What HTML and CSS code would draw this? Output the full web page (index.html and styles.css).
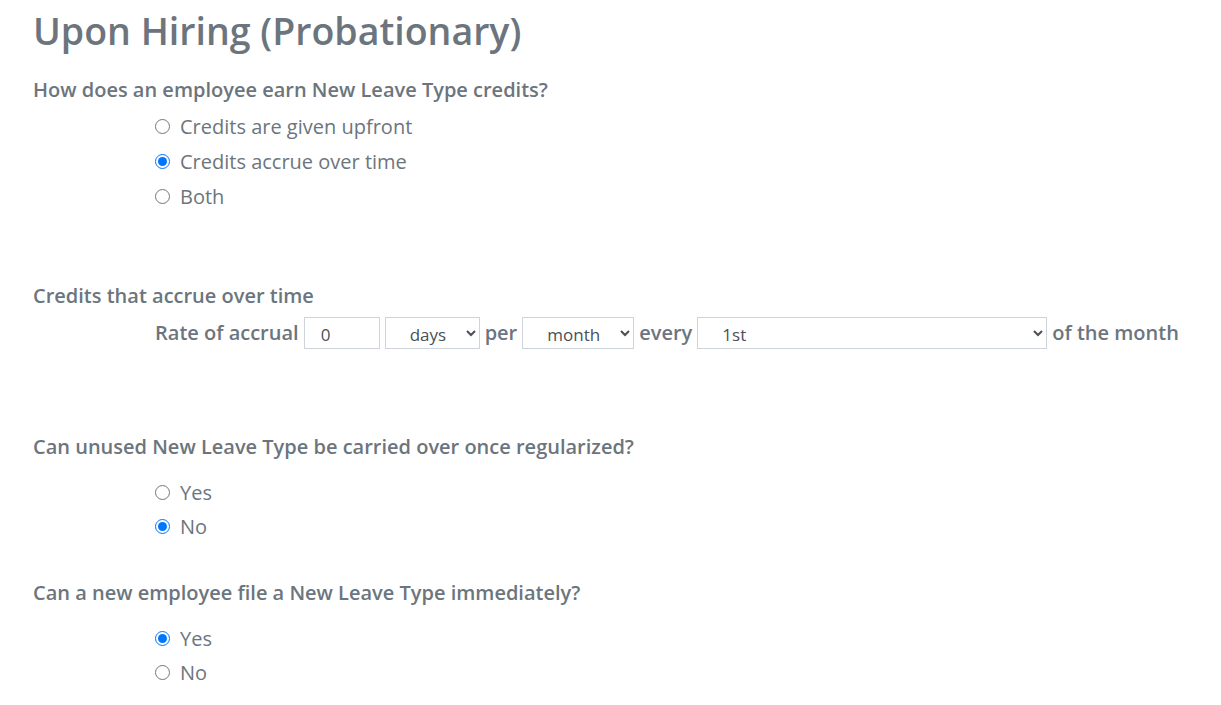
FILE: index.html
```html
<!DOCTYPE html>
<html lang="en">
<head>
  <meta charset="UTF-8" />
  <title>Upon Hiring (Probationary)</title>
  <link rel="stylesheet" href="styles.css">
</head>
<body>
  <div class="page">
    <h1 class="title">Upon Hiring (Probationary)</h1>

    <div class="question q-earn">How does an employee earn New Leave Type credits?</div>
    <div class="options opts-earn">
      <label class="option"><input type="radio" name="earn"> Credits are given upfront</label>
      <label class="option"><input type="radio" name="earn" checked> Credits accrue over time</label>
      <label class="option"><input type="radio" name="earn"> Both</label>
    </div>

    <div class="question q-accrue">Credits that accrue over time</div>
    <div class="rate-row">
      <span class="rate-label">Rate of accrual</span>
      <input type="text" class="field field-num" value="0">
      <select class="field field-unit">
        <option>days</option>
        <option>hours</option>
      </select>
      <span class="rate-label">per</span>
      <select class="field field-period">
        <option>month</option>
        <option>year</option>
      </select>
      <span class="rate-label">every</span>
      <select class="field field-day">
        <option>1st</option>
        <option>15th</option>
      </select>
      <span class="rate-label">of the month</span>
    </div>

    <div class="question q-carry">Can unused New Leave Type be carried over once regularized?</div>
    <div class="options opts-tight">
      <label class="option option-sm"><input type="radio" name="carry"> Yes</label>
      <label class="option option-sm"><input type="radio" name="carry" checked> No</label>
    </div>

    <div class="question q-file">Can a new employee file a New Leave Type immediately?</div>
    <div class="options opts-tight">
      <label class="option option-sm"><input type="radio" name="file" checked> Yes</label>
      <label class="option option-sm"><input type="radio" name="file"> No</label>
    </div>
  </div>
</body>
</html>
```

FILE: styles.css
```css
* {
  margin: 0; padding: 0; box-sizing: border-box;
}
body {
  font-family: 'Open Sans', 'Liberation Sans', sans-serif;
  color: #6c757d;
  background: #fff;
}
.page {
  padding: 7px 33px 0;
}
.title {
  font-size: 37.5px;
  font-weight: 600;
  line-height: 48px;
  color: #6c757d;
}
.question {
  font-size: 20px;
  font-weight: 600;
  line-height: 24px;
}
.q-earn { margin-top: 23px; }
.q-accrue { margin-top: 70px; }
.q-carry { margin-top: 86px; }
.q-file { margin-top: 38px; }

.options {
  padding-left: 122px;
  margin-top: 7px;
}
.opts-tight {
  margin-top: 16px;
}
.option {
  display: flex;
  align-items: center;
  height: 35px;
  font-size: 20px;
  gap: 10px;
}
.option-sm {
  height: 34px;
}
.option input {
  width: 15px;
  height: 15px;
  margin: 0;
}

.rate-row {
  display: flex;
  align-items: center;
  gap: 5px;
  padding-left: 122px;
  margin-top: 9px;
  height: 32px;
}
.rate-label {
  font-size: 20px;
  font-weight: 600;
  margin-top: -2px;
}
.field {
  height: 32px;
  border: 1px solid #ced4da;
  border-radius: 0;
  background: #fff;
  color: #495057;
  font-family: 'Open Sans', 'Liberation Sans', sans-serif;
  font-size: 17px;
  padding: 2px 8px 0 16px;
  outline: none;
}
select.field {
  padding-left: 20px;
}
.field-num { width: 76px; }
.field-unit { width: 95px; }
.field-period { width: 112px; }
.field-day { width: 350px; }
```
